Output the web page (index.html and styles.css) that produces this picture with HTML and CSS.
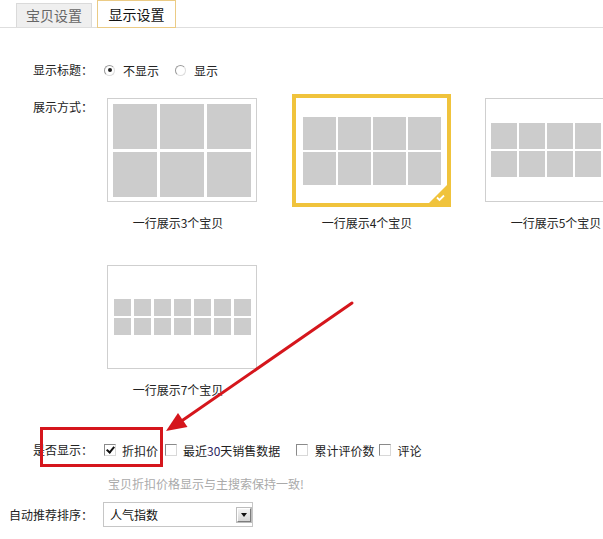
FILE: index.html
```html
<!DOCTYPE html>
<html lang="zh-CN">
<head>
<meta charset="utf-8">
<title>显示设置</title>
<link rel="stylesheet" href="styles.css">
</head>
<body>
<div class="page">
  <div class="tabs">
    <div class="tab">宝贝设置</div>
    <div class="tab active">显示设置</div>
  </div>

  <div class="row row-title">
    <div class="label">显示标题：</div>
    <div class="field">
      <span class="radio checked"></span><span class="opt">不显示</span>
      <span class="radio r2"></span><span class="opt">显示</span>
    </div>
  </div>

  <div class="row row-layout">
    <div class="label">展示方式：</div>
    <div class="field layouts">
      <div class="grid">
        <div class="item">
          <div class="box">
            <div class="cells c3">
              <i></i><i></i><i></i><i></i><i></i><i></i>
            </div>
          </div>
          <div class="cap">一行展示3个宝贝</div>
        </div>
        <div class="item">
          <div class="box selected">
            <div class="cells c4">
              <i></i><i></i><i></i><i></i><i></i><i></i><i></i><i></i>
            </div>
            <svg class="corner" width="18" height="18" viewBox="0 0 18 18">
              <polygon points="18,0 18,18 0,18" fill="#f0c33c"/>
              <polyline points="8,12.5 10.5,15 15,10.5" fill="none" stroke="#fff" stroke-width="1.8"/>
            </svg>
          </div>
          <div class="cap">一行展示4个宝贝</div>
        </div>
        <div class="item">
          <div class="box">
            <div class="cells c5">
              <i></i><i></i><i></i><i></i><i></i><i></i><i></i><i></i><i></i><i></i>
            </div>
          </div>
          <div class="cap">一行展示5个宝贝</div>
        </div>
        <div class="item">
          <div class="box">
            <div class="cells c7">
              <i></i><i></i><i></i><i></i><i></i><i></i><i></i>
              <i></i><i></i><i></i><i></i><i></i><i></i><i></i>
            </div>
          </div>
          <div class="cap">一行展示7个宝贝</div>
        </div>
      </div>
    </div>
  </div>

  <div class="row row-show">
    <div class="label">是否显示：</div>
    <div class="field">
      <span class="check checked"></span><span class="opt o1">折扣价</span>
      <span class="check"></span><span class="opt o2">最近<span class="num">30</span>天销售数据</span>
      <span class="check"></span><span class="opt o3">累计评价数</span>
      <span class="check"></span><span class="opt">评论</span>
    </div>
  </div>

  <div class="hint">宝贝折扣价格显示与主搜索保持一致!</div>

  <div class="row row-sort">
    <div class="label">自动推荐排序：</div>
    <div class="field">
      <div class="select">
        <span class="sel-text">人气指数</span>
        <span class="sel-btn"></span>
      </div>
    </div>
  </div>

  <svg class="annot" width="603" height="539" viewBox="0 0 603 539">
    <rect x="41.5" y="428.5" width="120" height="37" fill="none" stroke="#d5161c" stroke-width="3"/>
    <line x1="352" y1="303" x2="183" y2="420" stroke="#d5161c" stroke-width="3" stroke-linecap="round"/>
    <polygon points="166,431 187.5,427 178,413" fill="#d5161c"/>
  </svg>
</div>
</body>
</html>
```

FILE: styles.css
```css
html, body {
  margin: 0;
  padding: 0;
  background: #fff;
  overflow: hidden;
}

.page {
  position: relative;
  width: 603px;
  height: 539px;
  overflow: hidden;
  font-family: "Noto Sans CJK SC", "Noto Sans", sans-serif;
  font-size: 12px;
  color: #222;
}

.tabs {
  display: flex;
  align-items: flex-end;
  gap: 5px;
  height: 27px;
  padding-left: 16px;
  border-bottom: 1px solid #dedede;
}

.tab {
  box-sizing: border-box;
  width: 76px;
  height: 24px;
  line-height: 22px;
  text-align: center;
  font-size: 14px;
  color: #666;
  background: #efefef;
  border: 1px solid #dadada;
  border-bottom: none;
}

.tab.active {
  width: 79px;
  height: 28px;
  line-height: 26px;
  margin-bottom: -1px;
  color: #111;
  background: #fff;
  border: 1px solid #ebcb85;
}

.row {
  display: flex;
  align-items: flex-start;
}

.label {
  width: 93px;
  flex: none;
  text-align: right;
  line-height: 20px;
}

.field {
  flex: 1;
  min-width: 0;
  margin-left: 11px;
  display: flex;
  align-items: center;
  height: 20px;
}

.row-title {
  margin-top: 32px;
}

.row-layout {
  margin-top: 18px;
}

.row-layout .label {
  line-height: 18px;
}

.layouts {
  height: auto;
  display: block;
  overflow: hidden;
  padding-top: 4px;
  margin-top: -4px;
}

.grid {
  display: grid;
  grid-template-columns: repeat(3, 150px);
  column-gap: 39px;
  row-gap: 33px;
  margin-left: 3px;
}

.item {
  width: 150px;
}

.box {
  position: relative;
  box-sizing: border-box;
  width: 150px;
  height: 104px;
  border: 1px solid #cfcfcf;
  display: flex;
  align-items: center;
  justify-content: center;
  background: #fff;
}

.box.selected {
  width: 159px;
  height: 113px;
  margin: -4px 0 -5px -4px;
  border: 4px solid #f0c33c;
}

.corner {
  position: absolute;
  right: 0;
  bottom: 0;
  display: block;
}

.cells {
  display: grid;
}

.cells i {
  display: block;
  background: #cccccc;
}

.c3 {
  grid-template-columns: repeat(3, 44px);
  grid-auto-rows: 45px;
  gap: 3px;
}

.c4 {
  grid-template-columns: repeat(4, 33px);
  grid-auto-rows: 33px;
  gap: 2px;
}

.c5 {
  grid-template-columns: repeat(5, 26px);
  grid-auto-rows: 26px;
  gap: 2px;
}

.c7 {
  grid-template-columns: repeat(7, 17px);
  grid-auto-rows: 17px;
  column-gap: 3px;
  row-gap: 2px;
}

.cap {
  margin-top: 12px;
  margin-right: 8px;
  line-height: 18px;
  text-align: center;
  white-space: nowrap;
  color: #222;
}

.radio {
  position: relative;
  box-sizing: border-box;
  width: 11px;
  height: 11px;
  border-radius: 50%;
  border: 1px solid #9a9a9a;
  border-right-color: #dcdcdc;
  border-bottom-color: #dcdcdc;
  background: #fff;
  flex: none;
}

.radio.checked::after {
  content: "";
  position: absolute;
  left: 2.5px;
  top: 2.5px;
  width: 4px;
  height: 4px;
  border-radius: 50%;
  background: #222;
}

.radio.r2 {
  margin-left: 16px;
}

.opt {
  margin-left: 8px;
  white-space: nowrap;
}

.row-show {
  margin-top: 41px;
}

.check {
  position: relative;
  box-sizing: border-box;
  width: 12px;
  height: 12px;
  border: 1px solid #8a8a8a;
  border-right-color: #d8d8d8;
  border-bottom-color: #d8d8d8;
  background: #fff;
  flex: none;
}

.check.checked::after {
  content: "";
  position: absolute;
  left: 3px;
  top: 0px;
  width: 3px;
  height: 6px;
  border-right: 2px solid #111;
  border-bottom: 2px solid #111;
  transform: rotate(40deg);
}

.row-show .opt {
  margin-left: 6px;
}

.o1 { margin-right: 7px; }
.o2 { margin-right: 16px; }
.o3 { margin-right: 5px; }

.num {
  color: #2b2660;
}

.hint {
  margin-top: 16px;
  margin-left: 108px;
  line-height: 16px;
  color: #aaa;
}

.row-sort {
  margin-top: 10px;
  align-items: center;
}

.row-sort .field {
  margin-left: 10px;
  height: 25px;
}

.select {
  box-sizing: border-box;
  width: 150px;
  height: 25px;
  border: 1px solid #c6c6c6;
  display: flex;
  align-items: center;
  justify-content: space-between;
  padding: 0 1px 0 6px;
  background: #fff;
}

.sel-text {
  color: #111;
}

.sel-btn {
  position: relative;
  box-sizing: border-box;
  width: 14px;
  height: 14px;
  background: linear-gradient(#f4f4f4, #d6d6d6);
  border: 1px solid #fff;
  border-right-color: #7d7d7d;
  border-bottom-color: #7d7d7d;
  outline: 1px solid #bdbdbd;
}

.sel-btn::after {
  content: "";
  position: absolute;
  left: 3px;
  top: 4px;
  border-left: 3px solid transparent;
  border-right: 3px solid transparent;
  border-top: 4px solid #111;
}

.annot {
  position: absolute;
  left: 0;
  top: 0;
  pointer-events: none;
}
```
